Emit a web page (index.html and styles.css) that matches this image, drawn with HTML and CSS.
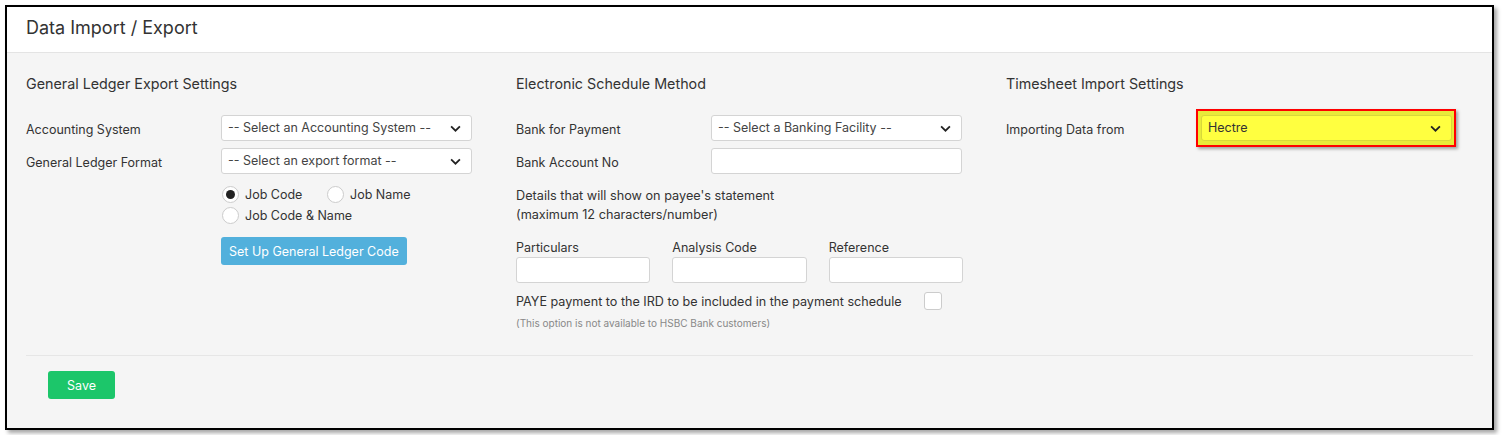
FILE: index.html
```html
<!DOCTYPE html>
<html lang="en">

<head>
    <meta charset="UTF-8">
    <meta name="viewport" content="width=device-width, initial-scale=1.0">
    <title>Data Import / Export</title>
    <link rel="stylesheet" href="styles.css">
</head>

<body>
    <div class="panel">
        <div class="panel-head">Data Import / Export</div>

        <div class="panel-body">
            <div class="columns">

                <!-- General Ledger Export Settings -->
                <div class="col">
                    <h3>General Ledger Export Settings</h3>
                    <div class="row">
                        <label>Accounting System</label>
                        <div class="select">
                            <span>-- Select an Accounting System --</span>
                            <svg viewBox="0 0 10 6" width="11" height="7"><path d="M1 1l4 4 4-4" fill="none" stroke="#222" stroke-width="1.6"/></svg>
                        </div>
                    </div>
                    <div class="row">
                        <label>General Ledger Format</label>
                        <div class="select">
                            <span>-- Select an export format --</span>
                            <svg viewBox="0 0 10 6" width="11" height="7"><path d="M1 1l4 4 4-4" fill="none" stroke="#222" stroke-width="1.6"/></svg>
                        </div>
                    </div>
                    <div class="radios">
                        <div class="radio-line">
                            <span class="radio checked"></span><span class="radio-text wide">Job Code</span>
                            <span class="radio"></span><span class="radio-text">Job Name</span>
                        </div>
                        <div class="radio-line">
                            <span class="radio"></span><span class="radio-text">Job Code &amp; Name</span>
                        </div>
                        <button class="btn-info">Set Up General Ledger Code</button>
                    </div>
                </div>

                <!-- Electronic Schedule Method -->
                <div class="col">
                    <h3>Electronic Schedule Method</h3>
                    <div class="row">
                        <label>Bank for Payment</label>
                        <div class="select">
                            <span>-- Select a Banking Facility --</span>
                            <svg viewBox="0 0 10 6" width="11" height="7"><path d="M1 1l4 4 4-4" fill="none" stroke="#222" stroke-width="1.6"/></svg>
                        </div>
                    </div>
                    <div class="row">
                        <label>Bank Account No</label>
                        <div class="input"></div>
                    </div>
                    <p class="details">Details that will show on payee's statement<br>(maximum 12 characters/number)</p>
                    <div class="triple">
                        <div class="field">
                            <label>Particulars</label>
                            <div class="input"></div>
                        </div>
                        <div class="field">
                            <label>Analysis Code</label>
                            <div class="input"></div>
                        </div>
                        <div class="field">
                            <label>Reference</label>
                            <div class="input"></div>
                        </div>
                    </div>
                    <div class="paye">
                        <span>PAYE payment to the IRD to be included in the payment schedule</span>
                        <span class="checkbox"></span>
                    </div>
                    <p class="hint">(This option is not available to HSBC Bank customers)</p>
                </div>

                <!-- Timesheet Import Settings -->
                <div class="col">
                    <h3>Timesheet Import Settings</h3>
                    <div class="row">
                        <label>Importing Data from</label>
                        <div class="highlight">
                            <div class="select yellow">
                                <span>Hectre</span>
                                <svg viewBox="0 0 10 6" width="11" height="7"><path d="M1 1l4 4 4-4" fill="none" stroke="#222" stroke-width="1.6"/></svg>
                            </div>
                        </div>
                    </div>
                </div>

            </div>

            <div class="panel-foot">
                <button class="btn-save">Save</button>
            </div>
        </div>
    </div>
</body>

</html>
```

FILE: styles.css
```css
body {
    font-family: 'Inter', 'Noto Sans', sans-serif;
    background: #fff;
    margin: 0;
    padding: 5px;
    color: #333;
}

.panel {
    width: 1485px;
    height: 421px;
    border: 2px solid #000;
    background: #f5f5f5;
    box-shadow: 3px 3px 4px rgba(0, 0, 0, 0.35);
    display: flex;
    flex-direction: column;
}

.panel-head {
    background: #fff;
    height: 45px;
    border-bottom: 1px solid #e4e4e4;
    padding-left: 19px;
    font-size: 18px;
    line-height: 42px;
    color: #333;
}

.panel-body {
    padding: 0 19px;
}

.columns {
    display: grid;
    grid-template-columns: 490px 490px 490px;
    height: 302px;
}

h3 {
    font-size: 14.3px;
    font-weight: 400;
    margin: 22px 0 23px;
    color: #333;
}

.row {
    display: flex;
    align-items: center;
    margin-bottom: 7px;
}

.row label {
    width: 195px;
    font-size: 12.5px;
    padding-top: 3px;
}

.select, .input {
    box-sizing: border-box;
    width: 251px;
    height: 26px;
    background: #fff;
    border: 1px solid #d4d4d4;
    border-radius: 3px;
}

.select {
    display: flex;
    align-items: center;
    justify-content: space-between;
    padding: 0 10px 0 6px;
    font-size: 12.5px;
    color: #444;
}

.select span {
    margin-top: -2px;
}

.select svg {
    margin-top: 1px;
}

.radios {
    margin-left: 195px;
    padding-top: 3px;
}

.radio-line {
    display: flex;
    align-items: center;
    height: 21px;
    font-size: 12.5px;
}

.radio {
    box-sizing: border-box;
    width: 17px;
    height: 17px;
    border: 1px solid #ccc;
    border-radius: 50%;
    background: #fff;
    position: relative;
    margin-left: 1px;
}

.radio.checked::after {
    content: "";
    position: absolute;
    left: 3px;
    top: 3px;
    width: 9px;
    height: 9px;
    border-radius: 50%;
    background: #222;
}

.radio-text {
    margin-left: 6px;
}

.radio-text.wide {
    width: 81px;
}

.btn-info {
    margin-top: 11px;
    background: #52b0dc;
    color: #fff;
    border: none;
    border-radius: 3px;
    height: 28px;
    padding: 0 8px;
    font-family: inherit;
    font-size: 12.5px;
}

.details {
    font-size: 12.7px;
    line-height: 19px;
    margin: 12px 0 0;
}

.triple {
    display: flex;
    gap: 22px;
    margin-top: 16px;
    width: 447px;
}

.field {
    display: flex;
    flex-direction: column;
    flex: 1;
}

.field label {
    font-size: 12.5px;
    margin-bottom: 2px;
}

.field .input {
    width: 100%;
}

.paye {
    display: flex;
    align-items: center;
    margin-top: 9px;
    font-size: 12.6px;
}

.checkbox {
    box-sizing: border-box;
    width: 18px;
    height: 18px;
    background: #fff;
    border: 1px solid #ccc;
    border-radius: 3px;
    margin-left: 22px;
}

.hint {
    font-size: 10px;
    color: #888;
    margin: 7px 0 0;
}

.highlight {
    margin: -6px 0 -6px -5px;
    border: 2px solid #ff0000;
    padding: 4px 2px 4px 3px;
    background: #e8ea3a;
    box-shadow: 2px 2px 3px rgba(0, 0, 0, 0.35);
}

.select.yellow {
    background: #ffff40;
    border-color: #d8d83a;
    color: #333;
}

.panel-foot {
    border-top: 1px solid #e6e6e6;
    padding: 15px 0 0 22px;
}

.btn-save {
    background: #1cc66a;
    color: #fff;
    border: none;
    border-radius: 3px;
    width: 67px;
    height: 28px;
    font-family: inherit;
    font-size: 12.5px;
}
```
